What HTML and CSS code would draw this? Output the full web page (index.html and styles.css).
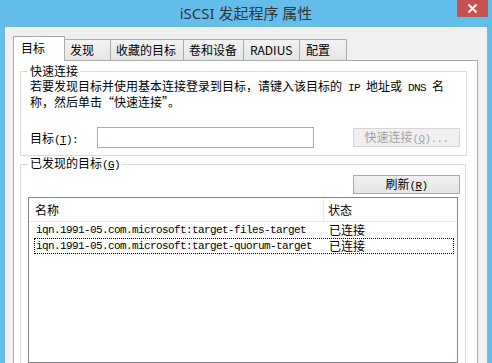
FILE: index.html
```html
<!DOCTYPE html><html><head><meta charset="utf-8">
<title>iSCSI 发起程序 属性</title>
<link rel="stylesheet" href="styles.css">
</head>
<body>
<div class="window">
	<div class="titlebar">
		<div class="title">iSCSI 发起程序 属性</div>
		<div class="close"><svg width="11" height="11" viewBox="0 0 11 11"><path d="M1.5 1.5 L9.5 9.5 M9.5 1.5 L1.5 9.5" stroke="#fff" stroke-width="2"/></svg></div>
	</div>
	<div class="client">
		<div class="tabs">
			<div class="tab active">目标</div>
			<div class="tab w1">发现</div>
			<div class="tab w2">收藏的目标</div>
			<div class="tab w3">卷和设备</div>
			<div class="tab w4">RADIUS</div>
			<div class="tab w5">配置</div>
		</div>
		<div class="panel">
			<fieldset class="quick">
				<legend>快速连接</legend>
				<p class="desc">若要发现目标并使用基本连接登录到目标，请键入该目标的<span class="en"> IP </span>地址或<span class="en"> DNS </span>名<br>称，然后单击“快速连接”。</p>
				<div class="row">
					<label class="lbl">目标<span class="en">(<u>T</u>):</span></label>
					<input type="text" class="target">
					<button class="btn disabled">快速连接<span class="en">(<u>Q</u>)...</span></button>
				</div>
			</fieldset>
			<fieldset class="found">
				<legend>已发现的目标<span class="en">(<u>G</u>)</span></legend>
				<button class="btn refresh">刷新<span class="en">(<u>R</u>)</span></button>
				<div class="lv">
					<div class="lv-head">
						<div class="c1">名称</div>
						<div class="c2">状态</div>
					</div>
					<div class="lv-row">
						<div class="name">iqn.1991-05.com.microsoft:target-files-target</div>
						<div class="state">已连接</div>
					</div>
					<div class="lv-row focus">
						<div class="name">iqn.1991-05.com.microsoft:target-quorum-target</div>
						<div class="state">已连接</div>
					</div>
				</div>
			</fieldset>
		</div>
	</div>
</div>
</body>
</html>
```

FILE: styles.css
```css
body {
	margin: 0;
	font-family: "Noto Sans CJK SC", sans-serif;
	font-size: 12px;
	color: #000;
}
.window {
	width: 492px;
	height: 363px;
	background: #64beeb;
	display: flex;
	flex-direction: column;
	overflow: hidden;
}
.titlebar {
	height: 27px;
	flex: none;
	display: grid;
	grid-template-columns: 1fr auto 1fr;
	align-items: start;
}
.title {
	grid-column: 2;
	font-family: "Noto Sans", "Noto Sans CJK SC", sans-serif;
	font-size: 15px;
	line-height: 27px;
	color: #333;
}
.close {
	grid-column: 3;
	justify-self: end;
	width: 31px;
	height: 17px;
	margin-right: 4px;
	background: #c75050;
	display: flex;
	align-items: center;
	justify-content: center;
}
.client {
	flex: 1;
	margin: 0 5px 0 5px;
	background: #f0f0f0;
	padding: 9px 9px 0 8px;
	display: flex;
	flex-direction: column;
	min-height: 0;
}
.tabs {
	display: flex;
	align-items: flex-end;
	height: 24px;
	flex: none;
}
.tab {
	box-sizing: border-box;
	height: 21px;
	border: 1px solid #acacac;
	border-bottom: 0;
	margin-left: -1px;
	padding-left: 5px;
	line-height: 19px;
	background: linear-gradient(#f2f2f2, #e6e6e6);
	white-space: nowrap;
}
.tab.active {
	width: 52px;
	height: 25px;
	margin-left: 0;
	margin-bottom: -1px;
	padding-left: 7px;
	line-height: 22px;
	background: #fff;
	position: relative;
	z-index: 1;
}
.w1 { width: 47px; }
.w2 { width: 74px; }
.w3 { width: 61px; }
.w4 { width: 57px; padding-left: 6px; }
.w5 { width: 48px; padding-left: 6px; }
.panel {
	flex: 1;
	background: #fff;
	border: 1px solid #acacac;
	border-bottom: 0;
	padding: 4px 10px 0 6px;
	position: relative;
	overflow: hidden;
}
fieldset {
	margin: 0;
	border: 1px solid #dcdcdc;
	min-width: 0;
}
legend {
	padding: 0 2px;
	line-height: 12px;
}
.en {
	font-family: "Liberation Mono", monospace;
	font-size: 11px;
	letter-spacing: -0.6px;
}
.quick {
	padding: 0 6px 7px 9px;
}
.quick legend {
	margin-left: -2px;
}
.desc {
	margin: 0;
	padding-top: 2px;
	line-height: 13px;
	white-space: nowrap;
}
.row {
	display: flex;
	align-items: center;
	margin-top: 19px;
	height: 21px;
}
.lbl {
	width: 67px;
}
.target {
	box-sizing: border-box;
	width: 217px;
	height: 21px;
	margin: 0;
	border: 1px solid #abadb3;
	padding: 0 3px;
}
.btn {
	box-sizing: border-box;
	width: 107px;
	height: 19px;
	margin: 0 0 0 auto;
	padding: 0;
	border: 1px solid #acacac;
	background: linear-gradient(#f0f0f0, #e5e5e5);
	font-family: "Noto Sans CJK SC", sans-serif;
	font-size: 12px;
	line-height: 16px;
	color: #000;
}
.btn.disabled {
	border-color: #d5d5d5;
	background: #f0f0f0;
	color: #a3a3a3;
}
.found {
	margin: 1px 1px 0 0;
	padding: 0 5px 20px 7px;
}
.refresh {
	display: block;
	margin-top: 4px;
}
.lv {
	margin: 3px 2px 0 0;
	height: 166px;
	box-sizing: border-box;
	border: 1px solid #828790;
}
.lv-head {
	display: flex;
	height: 24px;
	box-sizing: border-box;
	border-bottom: 1px solid #e3e9f0;
	line-height: 23px;
}
.lv-head .c1 {
	box-sizing: border-box;
	width: 295px;
	padding-left: 6px;
	border-right: 1px solid #e3e9f0;
}
.lv-head .c2 {
	padding-left: 4px;
}
.lv-row {
	display: flex;
	box-sizing: border-box;
	height: 16px;
	margin: 0 3px 0 5px;
	padding-left: 1px;
	border: 1px dotted transparent;
	line-height: 14px;
	white-space: nowrap;
}
.lv-row.focus {
	border-color: #000;
}
.lv-row .name {
	width: 293px;
	flex: none;
	font-family: "Liberation Mono", monospace;
	font-size: 11px;
	letter-spacing: -0.6px;
}
```
